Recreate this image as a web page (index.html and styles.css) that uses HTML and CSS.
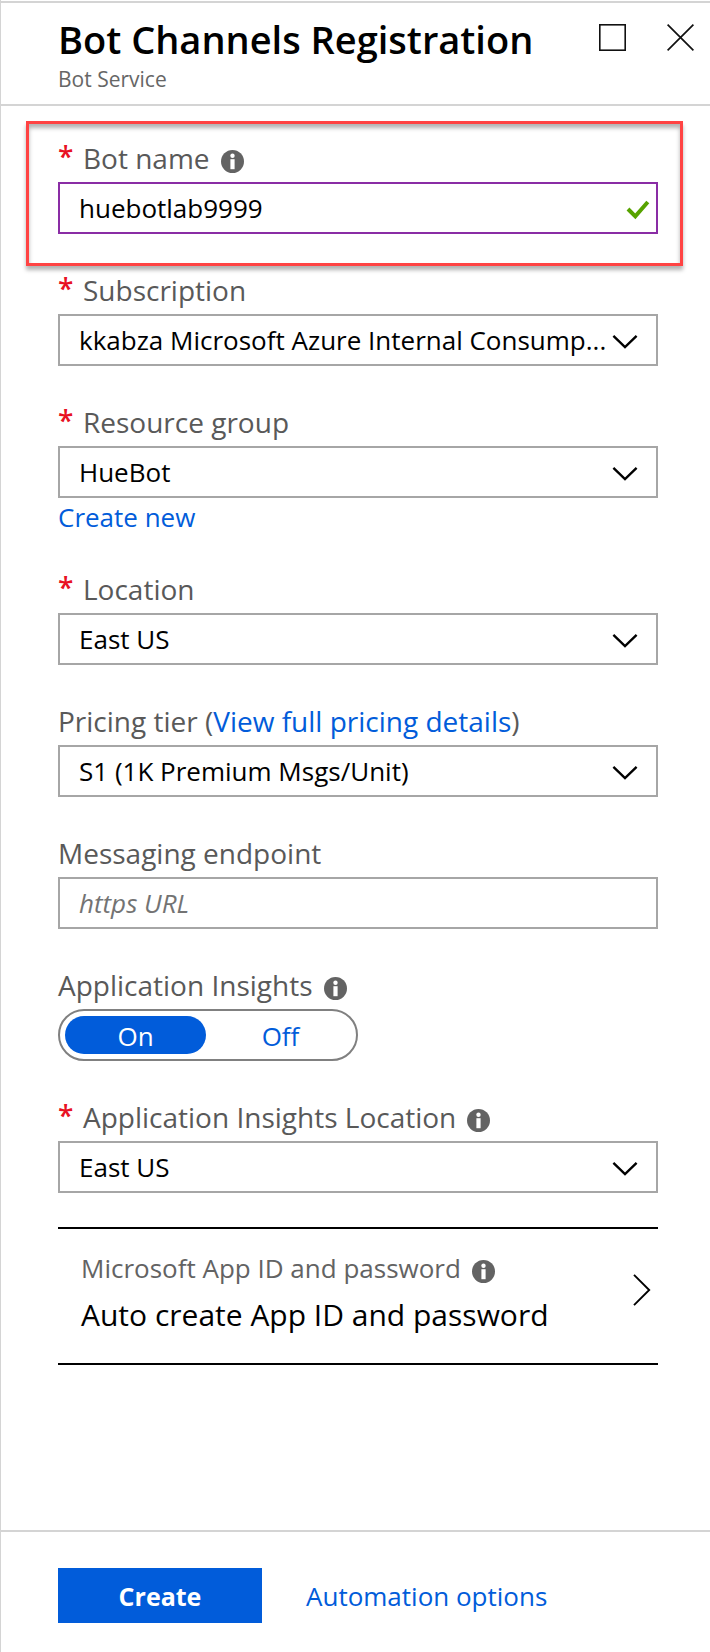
FILE: index.html
```html
<!DOCTYPE html>
<html lang="en">
<head>
<meta charset="utf-8">
<meta name="viewport" content="width=device-width, initial-scale=1">
<title>Bot Channels Registration</title>
<link rel="stylesheet" href="styles.css">
</head>
<body>
<svg class="sprite" aria-hidden="true">
  <symbol id="info" viewBox="0 0 23 23">
    <circle cx="11.5" cy="11.5" r="11.5" fill="#636363"/>
    <circle cx="11.5" cy="5.8" r="2.2" fill="#fff"/>
    <rect x="9.4" y="9.2" width="4.2" height="10" fill="#fff"/>
  </symbol>
  <symbol id="chevron" viewBox="0 0 26 16">
    <path d="M1.4 1.8 13 13 24.6 1.8" fill="none" stroke="#000" stroke-width="2.4"/>
  </symbol>
</svg>
<main class="blade">
  <header class="header">
    <div class="heading">
      <h1 class="title">Bot Channels Registration</h1>
      <p class="subtitle">Bot Service</p>
    </div>
    <div class="window-actions">
      <button class="icon-button" type="button" aria-label="Maximize">
        <svg width="27" height="27" viewBox="0 0 27 27"><rect x=".8" y=".8" width="25.4" height="25.4" fill="none" stroke="#111" stroke-width="1.6"/></svg>
      </button>
      <button class="icon-button" type="button" aria-label="Close">
        <svg width="27" height="27" viewBox="0 0 27 27"><path d="M.6.6 26.4 26.4M26.4.6.6 26.4" fill="none" stroke="#111" stroke-width="1.7"/></svg>
      </button>
    </div>
  </header>

  <form class="form">
    <div class="highlight">
      <div class="field">
        <div class="label-row">
          <span class="required">*</span>
          <label for="bot-name">Bot name</label>
          <svg class="info"><use href="#info"/></svg>
        </div>
        <div class="control">
          <input class="box box-valid" id="bot-name" type="text" value="huebotlab9999">
          <svg class="check" viewBox="0 0 24 20"><path d="M2 9 9.3 16.3 21.8 2" fill="none" stroke="#57a300" stroke-width="4"/></svg>
        </div>
      </div>
    </div>

    <div class="field">
      <div class="label-row">
        <span class="required">*</span>
        <label for="subscription">Subscription</label>
      </div>
      <div class="control">
        <select class="box" id="subscription"><option>kkabza Microsoft Azure Internal Consump...</option></select>
        <svg class="chevron"><use href="#chevron"/></svg>
      </div>
    </div>

    <div class="field">
      <div class="label-row">
        <span class="required">*</span>
        <label for="resource-group">Resource group</label>
      </div>
      <div class="control">
        <select class="box" id="resource-group"><option>HueBot</option></select>
        <svg class="chevron"><use href="#chevron"/></svg>
      </div>
      <a class="link below" href="#">Create new</a>
    </div>

    <div class="field">
      <div class="label-row">
        <span class="required">*</span>
        <label for="location">Location</label>
      </div>
      <div class="control">
        <select class="box" id="location"><option>East US</option></select>
        <svg class="chevron"><use href="#chevron"/></svg>
      </div>
    </div>

    <div class="field">
      <div class="label-row">
        <span><label for="pricing">Pricing tier</label> (<a class="link" href="#">View full pricing details</a>)</span>
      </div>
      <div class="control">
        <select class="box" id="pricing"><option>S1 (1K Premium Msgs/Unit)</option></select>
        <svg class="chevron"><use href="#chevron"/></svg>
      </div>
    </div>

    <div class="field">
      <div class="label-row">
        <label for="endpoint">Messaging endpoint</label>
      </div>
      <div class="control">
        <input class="box" id="endpoint" type="text" placeholder="https URL">
      </div>
    </div>

    <div class="field" role="radiogroup" aria-labelledby="insights-label">
      <div class="label-row">
        <span id="insights-label">Application Insights</span>
        <svg class="info"><use href="#info"/></svg>
      </div>
      <div class="toggle">
        <input class="toggle-input" type="radio" name="insights" id="insights-on" checked>
        <label class="toggle-option" for="insights-on">On</label>
        <input class="toggle-input" type="radio" name="insights" id="insights-off">
        <label class="toggle-option" for="insights-off">Off</label>
      </div>
    </div>

    <div class="field">
      <div class="label-row">
        <span class="required">*</span>
        <label for="insights-location">Application Insights Location</label>
        <svg class="info"><use href="#info"/></svg>
      </div>
      <div class="control">
        <select class="box" id="insights-location"><option>East US</option></select>
        <svg class="chevron"><use href="#chevron"/></svg>
      </div>
    </div>

    <button class="picker" type="button">
      <span class="picker-text">
        <span class="picker-label">Microsoft App ID and password <svg class="info"><use href="#info"/></svg></span>
        <span class="picker-value">Auto create App ID and password</span>
      </span>
      <svg class="picker-arrow" viewBox="0 0 18 32"><path d="M1 .8 16.2 16 1 31.2" fill="none" stroke="#000" stroke-width="1.9"/></svg>
    </button>
  </form>

  <footer class="footer">
    <button class="create" type="button">Create</button>
    <a class="link" href="#">Automation options</a>
  </footer>
</main>
</body>
</html>
```
FILE: styles.css
```css
*,
*::before,
*::after {
  box-sizing: border-box;
}

body {
  margin: 0;
  background: #fff;
  color: #000;
  font-family: "Open Sans", "Noto Sans", sans-serif;
  font-size: 26px;
}

button,
input,
select {
  font: inherit;
  color: inherit;
}

.sprite {
  display: none;
}

.blade {
  display: flex;
  flex-direction: column;
  min-height: 100vh;
  padding-top: 1px;
  border-left: 1px solid #d4d4d4;
}

.header {
  display: flex;
  justify-content: space-between;
  align-items: flex-start;
  padding: 10px 16px 11px 57px;
  border-top: 2px solid #d4d4d4;
  border-bottom: 2px solid #d4d4d4;
}

.title {
  margin: 0;
  font-size: 38px;
  font-weight: 600;
  line-height: 52px;
}

.subtitle {
  margin: 0;
  color: #666;
  font-size: 21px;
  line-height: 28px;
}

.window-actions {
  display: flex;
  gap: 41px;
  padding-top: 11px;
}

.icon-button {
  display: flex;
  padding: 0;
  border: 0;
  background: none;
}

.form {
  flex: 1;
  padding: 15px 52px 36px 57px;
}

.highlight {
  margin: 0 -25px 8px -32px;
  padding: 18px 22px 29px 29px;
  border: 3px solid #ff4343;
  box-shadow: 0 4px 4px rgba(0, 0, 0, 0.3), inset 0 4px 4px rgba(0, 0, 0, 0.3);
}

.field {
  margin-bottom: 40px;
}

.highlight .field {
  margin-bottom: 0;
}

.label-row {
  display: flex;
  align-items: center;
  margin-bottom: 8px;
  color: #595959;
  font-size: 28px;
  line-height: 32px;
}

.required {
  align-self: flex-start;
  width: 25px;
  color: #e81123;
  font-weight: 600;
  line-height: 28px;
}

.info {
  flex: none;
  width: 23px;
  height: 23px;
  margin: 6px 0 0 11px;
}

.control {
  position: relative;
}

.box {
  display: block;
  width: 100%;
  height: 52px;
  margin: 0;
  padding: 0 48px 0 19px;
  border: 2px solid #a6a6a6;
  border-radius: 0;
  background: #fff;
  appearance: none;
}

.box-valid {
  border-color: #8a2da5;
}

.box::placeholder {
  color: #737373;
  font-style: italic;
  opacity: 1;
}

.chevron,
.check {
  position: absolute;
  top: 20px;
  right: 20px;
  width: 26px;
  height: 16px;
  pointer-events: none;
}

.check {
  top: 18px;
  right: 8px;
  width: 24px;
  height: 20px;
}

.link {
  color: #015cda;
  text-decoration: none;
}

.below {
  display: block;
  width: fit-content;
  margin-top: 3px;
  line-height: 32px;
}

.toggle {
  display: flex;
  gap: 4px;
  width: 300px;
  height: 52px;
  padding: 5px;
  border: 2px solid #808080;
  border-radius: 26px;
}

.toggle-input {
  position: absolute;
  opacity: 0;
}

.toggle-option {
  flex: 1;
  border-radius: 19px;
  color: #015cda;
  line-height: 40px;
  text-align: center;
}

.toggle-input:checked + .toggle-option {
  background: #015cda;
  color: #fff;
}

.picker {
  display: flex;
  justify-content: space-between;
  align-items: center;
  width: 100%;
  margin-top: -6px;
  padding: 21px 7px 26px 23px;
  border: solid #000;
  border-width: 2px 0;
  background: none;
  text-align: left;
}

.picker-text {
  display: flex;
  flex-direction: column;
  gap: 7px;
}

.picker-label {
  display: flex;
  align-items: center;
  color: #636363;
  line-height: 36px;
}

.picker-value {
  font-size: 30px;
  line-height: 44px;
}

.picker-arrow {
  flex: none;
  width: 18px;
  height: 32px;
  margin-bottom: 8px;
}

.footer {
  display: flex;
  align-items: center;
  gap: 44px;
  padding: 36px 52px 29px 57px;
  border-top: 2px solid #d4d4d4;
}

.create {
  width: 204px;
  height: 55px;
  padding: 0;
  border: 0;
  background: #015cda;
  color: #fff;
  font-size: 25px;
  font-weight: 700;
}
```
